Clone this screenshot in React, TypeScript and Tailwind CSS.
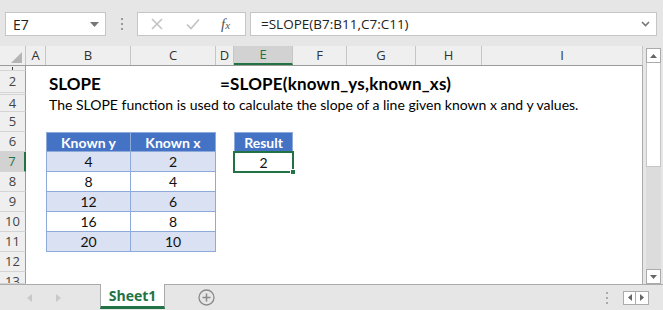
import React from "react";

const COLS = [
  { k: "A", w: 20 },
  { k: "B", w: 85 },
  { k: "C", w: 85 },
  { k: "D", w: 18 },
  { k: "E", w: 59 },
  { k: "F", w: 54 },
  { k: "G", w: 69 },
  { k: "H", w: 66 },
  { k: "I", w: 161 },
];

const uiFont = { fontFamily: '"Open Sans", "Noto Sans", sans-serif' };
const cellFont = { fontFamily: 'Lato, "Open Sans", sans-serif' };

type Cell = { content?: React.ReactNode; cls?: string };

function Row({
  num,
  h,
  cells,
  selected,
  align = "center",
}: {
  num: React.ReactNode;
  h: number;
  cells: Record<string, Cell>;
  selected?: boolean;
  align?: "center" | "start";
}) {
  return (
    <div className="flex shrink-0" style={{ height: h }}>
      <div
        className={
          "w-[26px] shrink-0 flex justify-center overflow-hidden border-b border-[#d4d4d4] " +
          (align === "start" ? "items-start " : "items-center ") +
          (selected
            ? "bg-[#d2d2d2] text-[#217346] border-r-2 border-r-[#217346]"
            : "bg-[#efefef] text-[#444] border-r border-r-[#9b9b9b]")
        }
        style={uiFont}
      >
        {typeof num === "string" ? (
          <div
            className={
              "shrink-0 flex items-center justify-center text-[13px] leading-none " +
              (align === "start" ? "h-[19px]" : "h-full")
            }
          >
            {num}
          </div>
        ) : (
          num
        )}
      </div>
      {COLS.map((c) => {
        const cell = cells[c.k];
        return (
          <div
            key={c.k}
            className={"shrink-0 relative " + (cell?.cls ?? "")}
            style={{ width: c.w }}
          >
            {cell?.content}
          </div>
        );
      })}
    </div>
  );
}

const tBase = "flex items-center justify-center text-[14px] text-[#111] border-r border-b border-[#8eaadb]";
const blueHead = "flex items-center justify-center text-[14px] font-bold text-white bg-[#4472c4] border-r border-b border-t border-[#8eaadb]";

function tableRow(y: string, x: string, shaded: boolean): Record<string, Cell> {
  const bg = shaded ? " bg-[#d9e1f2]" : " bg-white";
  return {
    B: { content: y, cls: tBase + bg + " border-l" },
    C: { content: x, cls: tBase + bg },
  };
}

export default function App() {
  return (
    <div
      className="w-[663px] h-[310px] bg-[#e6e6e6] overflow-hidden flex flex-col relative"
      style={uiFont}
    >
      {/* formula bar */}
      <div className="h-[46px] shrink-0 flex items-start pt-[12px] pl-[5px]">
        <div className="w-[101px] h-[24px] bg-white border border-[#c6c6c6] flex items-center justify-between pl-[7px] pr-[6px] text-[14px] text-[#222]">
          <span>E7</span>
          <svg width="9" height="5" viewBox="0 0 9 5">
            <path d="M0 0 L9 0 L4.5 5 Z" fill="#777" />
          </svg>
        </div>
        <div className="w-[31px] h-[24px] flex flex-col items-center justify-center gap-[3px]">
          <span className="w-[2px] h-[2px] bg-[#999]" />
          <span className="w-[2px] h-[2px] bg-[#999]" />
          <span className="w-[2px] h-[2px] bg-[#999]" />
        </div>
        <div className="w-[109px] h-[24px] bg-white border border-[#c6c6c6] flex items-center pl-[13px]">
          <svg width="12" height="12" viewBox="0 0 12 12">
            <path d="M1 1 L11 11 M11 1 L1 11" stroke="#c2c2c2" strokeWidth="1.6" />
          </svg>
          <svg width="14" height="12" viewBox="0 0 14 12" className="ml-[23px]">
            <path d="M1 6.5 L5 10.5 L13 1.5" stroke="#c2c2c2" strokeWidth="1.6" fill="none" />
          </svg>
          <span
            className="ml-[21px] italic text-[15px] text-[#555] leading-none"
            style={{ fontFamily: '"Liberation Serif", serif' }}
          >
            f<span className="text-[11px]">x</span>
          </span>
        </div>
        <div className="ml-[4px] w-[407px] h-[24px] bg-white border border-[#c6c6c6] flex items-center justify-between pl-[10px] pr-[6px] text-[13.5px] text-[#222]">
          <span>=SLOPE(B7:B11,C7:C11)</span>
          <svg width="9" height="6" viewBox="0 0 9 6">
            <path d="M1 1 L4.5 4.5 L8 1" stroke="#777" strokeWidth="1.6" fill="none" />
          </svg>
        </div>
      </div>

      {/* sheet area */}
      <div className="flex h-[238px] shrink-0">
        <div className="w-[643px] shrink-0 flex flex-col bg-white border-r border-[#ababab]">
          {/* column headers */}
          <div className="flex h-[20px] shrink-0 bg-[#efefef] border-b border-[#9b9b9b]">
            <div className="w-[26px] shrink-0 border-r border-[#c6c6c6] flex items-end justify-end pr-[3px] pb-[2px]">
              <svg width="11" height="11" viewBox="0 0 11 11">
                <path d="M11 0 L11 11 L0 11 Z" fill="#b4b4b4" />
              </svg>
            </div>
            {COLS.map((c) =>
              c.k === "E" ? (
                <div
                  key={c.k}
                  className="shrink-0 flex items-center justify-center text-[13px] bg-[#d2d2d2] text-[#217346] border-r border-[#c6c6c6] border-b-2 border-b-[#217346]"
                  style={{ width: c.w }}
                >
                  {c.k}
                </div>
              ) : (
                <div
                  key={c.k}
                  className="shrink-0 flex items-center justify-center text-[13px] text-[#333] border-r border-[#c6c6c6]"
                  style={{ width: c.w }}
                >
                  {c.k}
                </div>
              )
            )}
          </div>

          <div className="flex flex-col" style={cellFont}>
            <Row num={<span className="w-[1px] h-[3px] bg-[#444]" />} h={5} cells={{}} />
            <Row
              num="2"
              h={22}
              cells={{
                B: {
                  content: (
                    <span className="absolute left-[3px] top-[0px] whitespace-nowrap text-[17px] font-bold text-black">
                      SLOPE
                    </span>
                  ),
                },
                D: {
                  content: (
                    <span className="absolute left-[4px] top-[0px] whitespace-nowrap text-[17px] font-bold text-black tracking-[0.2px]">
                      =SLOPE(known_ys,known_xs)
                    </span>
                  ),
                },
              }}
            />
            <Row num={null} h={2} cells={{}} />
            <Row
              num="4"
              h={17}
              cells={{
                B: {
                  content: (
                    <span className="absolute left-[3px] top-[-1px] whitespace-nowrap text-[14px] text-black">
                      The SLOPE function is used to calculate the slope of a line given known x and y values.
                    </span>
                  ),
                },
              }}
            />
            <Row num="5" h={20} cells={{}} />
            <Row
              num="6"
              h={20}
              cells={{
                B: { content: "Known y", cls: blueHead + " border-l" },
                C: { content: "Known x", cls: blueHead },
                E: { content: "Result", cls: blueHead + " border-l" },
              }}
            />
            <Row
              num="7"
              h={20}
              selected
              cells={{
                ...tableRow("4", "2", true),
                E: {
                  content: (
                    <>
                      <span>2</span>
                      <span className="absolute left-[-1px] top-[-1px] right-[-1px] bottom-[-1px] border-2 border-[#217346]" />
                      <span className="absolute right-[-3px] bottom-[-3px] w-[6px] h-[6px] bg-[#217346] border border-white" />
                    </>
                  ),
                  cls: "flex items-center justify-center text-[14px] text-[#111]",
                },
              }}
            />
            <Row num="8" h={20} cells={tableRow("8", "4", false)} />
            <Row num="9" h={20} cells={tableRow("12", "6", true)} />
            <Row num="10" h={20} cells={tableRow("16", "8", false)} />
            <Row num="11" h={20} cells={tableRow("20", "10", true)} />
            <Row num="12" h={20} cells={{}} />
            <Row num="13" h={12} align="start" cells={{}} />
          </div>
        </div>

        {/* vertical scrollbar */}
        <div className="w-[20px] shrink-0 flex flex-col items-start pl-[3px] pt-[2px] pb-[0px]">
          <div className="w-[15px] h-[15px] bg-white border border-[#ababab] flex items-center justify-center">
            <svg width="7" height="4" viewBox="0 0 7 4">
              <path d="M0 4 L7 4 L3.5 0 Z" fill="#666" />
            </svg>
          </div>
          <div className="w-[15px] flex-1 flex flex-col bg-[#dcdcdc]">
            <div className="h-[104px] bg-white border-x border-b border-[#c6c6c6]" />
          </div>
          <div className="w-[15px] h-[15px] bg-white border border-[#ababab] flex items-center justify-center">
            <svg width="7" height="4" viewBox="0 0 7 4">
              <path d="M0 0 L7 0 L3.5 4 Z" fill="#666" />
            </svg>
          </div>
        </div>
      </div>

      {/* tab bar */}
      <div className="flex-1 flex items-start border-t border-[#ababab]">
        <div className="w-[100px] h-full flex items-center pl-[27px] gap-[24px]">
          <svg width="5" height="8" viewBox="0 0 5 8">
            <path d="M5 0 L5 8 L0 4 Z" fill="#c8c8c8" />
          </svg>
          <svg width="5" height="8" viewBox="0 0 5 8">
            <path d="M0 0 L0 8 L5 4 Z" fill="#c8c8c8" />
          </svg>
        </div>
        <div className="w-[65px] h-[25px] mt-[-1px] bg-white border-x border-[#ababab] border-b-[3px] border-b-[#217346] flex items-center justify-center text-[14px] font-bold text-[#217346]">
          Sheet1
        </div>
        <div className="ml-[33px] h-full flex items-center">
          <svg width="17" height="17" viewBox="0 0 17 17">
            <circle cx="8.5" cy="8.5" r="7.5" fill="none" stroke="#8a8a8a" strokeWidth="1.3" />
            <path d="M8.5 4.5 V12.5 M4.5 8.5 H12.5" stroke="#8a8a8a" strokeWidth="1.5" />
          </svg>
        </div>
        <div className="flex-1" />
        <div className="h-full flex items-center mr-[14px]">
          <div className="flex flex-col gap-[3px] mr-[15px]">
            <span className="w-[2px] h-[2px] bg-[#aaa]" />
            <span className="w-[2px] h-[2px] bg-[#aaa]" />
            <span className="w-[2px] h-[2px] bg-[#aaa]" />
          </div>
          <div className="w-[13px] h-[14px] bg-white border border-[#ababab] flex items-center justify-center">
            <svg width="4" height="7" viewBox="0 0 4 7">
              <path d="M4 0 L4 7 L0 3.5 Z" fill="#666" />
            </svg>
          </div>
          <div className="w-[13px] h-[14px] bg-white border border-l-0 border-[#ababab] flex items-center justify-center">
            <svg width="4" height="7" viewBox="0 0 4 7">
              <path d="M0 0 L0 7 L4 3.5 Z" fill="#666" />
            </svg>
          </div>
        </div>
      </div>
    </div>
  );
}
